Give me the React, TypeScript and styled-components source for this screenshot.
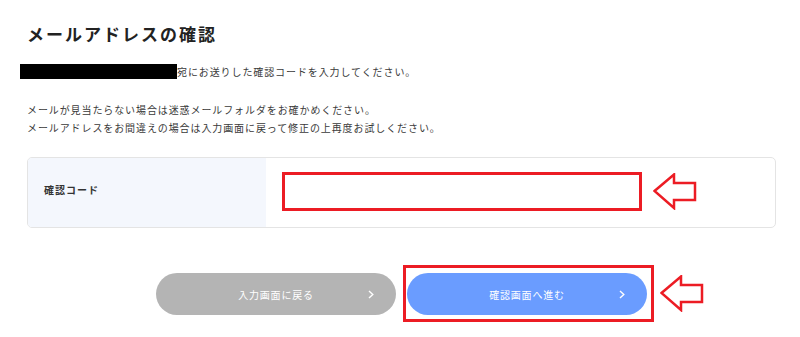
import styled, { createGlobalStyle } from 'styled-components';

const GlobalStyle = createGlobalStyle`
  html, body {
    margin: 0;
    padding: 0;
    background: #ffffff;
  }
  body {
    font-family: "Noto Sans CJK JP", "Noto Sans", sans-serif;
    color: #333333;
  }
`;

const Page = styled.div`
  width: 776px;
  min-height: 337px;
  box-sizing: border-box;
  padding: 22px 0 24px 27px;
`;

const Title = styled.h1`
  margin: 0;
  font-size: 17px;
  line-height: 24px;
  font-weight: 700;
  letter-spacing: 2px;
  color: #222222;
`;

const Text = styled.p<{ $gap?: number }>`
  margin: ${({ $gap }) => $gap ?? 0}px 0 0 0;
  font-size: 10px;
  line-height: 18px;
  letter-spacing: 0.9px;
  color: #3a3a3a;
`;

const Redacted = styled.span`
  display: inline-block;
  width: 157px;
  height: 15px;
  margin-left: -7px;
  background: #000000;
  vertical-align: -3px;
`;

const Card = styled.div`
  margin-top: 20px;
  height: 71px;
  box-sizing: border-box;
  border: 1px solid #e4e4e4;
  border-radius: 5px;
  overflow: hidden;
  display: grid;
  grid-template-columns: 238px 1fr;
`;

const LabelCell = styled.div`
  background: #f4f7fd;
  display: flex;
  align-items: center;
  padding: 0 0 6px 16px;
  font-size: 10px;
  font-weight: 700;
  letter-spacing: 1px;
  color: #333333;
`;

const FieldCell = styled.div`
  display: flex;
  align-items: center;
  gap: 11px;
  padding: 0 0 2px 16px;
`;

const CodeInput = styled.input`
  width: 360px;
  height: 39px;
  box-sizing: border-box;
  border: 3px solid #ec1c24;
  background: #ffffff;
  outline: none;
  font-family: inherit;
`;

const Buttons = styled.div`
  margin-top: 45px;
  display: flex;
  justify-content: center;
  align-items: flex-start;
  gap: 11px;
`;

const Marked = styled.div`
  position: relative;
  display: flex;

  &::after {
    content: '';
    position: absolute;
    left: -4px;
    right: -7px;
    top: -8px;
    bottom: -7px;
    border: 3px solid #ec1c24;
    pointer-events: none;
  }
`;

const Button = styled.button<{ $tone: 'gray' | 'blue' }>`
  width: 240px;
  height: 42px;
  border: none;
  border-radius: 21px;
  padding: 0;
  background: ${({ $tone }) => ($tone === 'blue' ? '#6a9cff' : '#b4b4b4')};
  color: #ffffff;
  font-family: inherit;
  font-size: 10px;
  letter-spacing: 0.8px;
  display: grid;
  grid-template-columns: 50px 1fr 50px;
  align-items: center;
`;

const Label = styled.span`
  grid-column: 2;
  text-align: center;
`;

const Chevron = styled.svg`
  grid-column: 3;
  justify-self: center;
`;

const SideArrow = styled.svg`
  flex: none;
`;

const ButtonArrow = styled.svg`
  position: absolute;
  left: calc(100% + 13px);
  top: 2px;
`;

const ArrowShape = () => (
  <polygon
    points="1.5,18 21,1.5 21,10 42,10 42,27 21,27 21,35"
    fill="#ffffff"
    stroke="#ec1c24"
    strokeWidth="2.5"
    strokeLinejoin="miter"
  />
);

const Next = () => (
  <Chevron width="6" height="9" viewBox="0 0 6 9">
    <polyline points="1,1 4.8,4.5 1,8" fill="none" stroke="#ffffff" strokeWidth="1.4" />
  </Chevron>
);

export default function App() {
  return (
    <>
      <GlobalStyle />
      <Page>
        <Title>メールアドレスの確認</Title>
        <Text $gap={17}>
          <Redacted />
          宛にお送りした確認コードを入力してください。
        </Text>
        <Text $gap={20}>メールが見当たらない場合は迷惑メールフォルダをお確かめください。</Text>
        <Text>メールアドレスをお間違えの場合は入力画面に戻って修正の上再度お試しください。</Text>

        <Card>
          <LabelCell>確認コード</LabelCell>
          <FieldCell>
            <CodeInput type="text" />
            <SideArrow width="44" height="37" viewBox="0 0 44 37">
              <ArrowShape />
            </SideArrow>
          </FieldCell>
        </Card>

        <Buttons>
          <Button $tone="gray">
            <Label>入力画面に戻る</Label>
            <Next />
          </Button>
          <Marked>
            <Button $tone="blue">
              <Label>確認画面へ進む</Label>
              <Next />
            </Button>
            <ButtonArrow width="44" height="37" viewBox="0 0 44 37">
              <ArrowShape />
            </ButtonArrow>
          </Marked>
        </Buttons>
      </Page>
    </>
  );
}
